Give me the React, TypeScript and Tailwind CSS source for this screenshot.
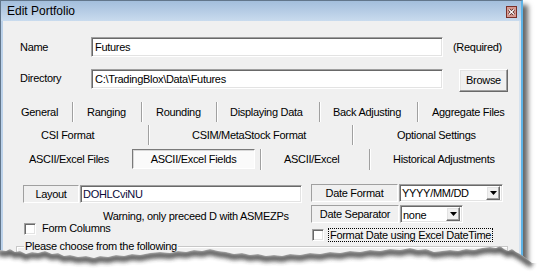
import React from "react";

const sunken =
  "border border-t-[#a0a0a0] border-l-[#a0a0a0] border-b-white border-r-white shadow-[inset_1px_1px_0_#696969,inset_-1px_-1px_0_#e3e3e3]";
const raised =
  "border border-t-white border-l-white border-b-[#696969] border-r-[#696969] shadow-[inset_-1px_-1px_0_#a0a0a0,inset_1px_1px_0_#e3e3e3]";
const etchBox =
  "border border-t-[#a0a0a0] border-l-[#a0a0a0] border-b-white border-r-white";

function Sep() {
  return (
    <div className="h-full w-[2px] shrink-0 border-l border-l-[#a0a0a0] border-r border-r-white" />
  );
}

function Tab({ cls, children }: { cls: string; children: React.ReactNode }) {
  return (
    <div className={`flex h-full shrink-0 items-center whitespace-nowrap ${cls}`}>
      {children}
    </div>
  );
}

function Arrow() {
  return (
    <div className={`flex h-[14px] w-[14px] shrink-0 items-center justify-center bg-[#f0f0f0] ${raised}`}>
      <svg width="7" height="4" viewBox="0 0 7 4">
        <path d="M0 0h7L3.5 4z" fill="#000" />
      </svg>
    </div>
  );
}

function Check() {
  return <div className={`h-[12px] w-[12px] shrink-0 bg-white ${sunken}`} />;
}

const jag: [number, number][] = [
  [-2, 250], [0, 250], [6, 251], [10, 249], [15, 252], [20, 251], [26, 254], [32, 252], [38, 253],
  [45, 251], [52, 254], [58, 253], [64, 256], [70, 255], [78, 257], [86, 256], [94, 258],
  [100, 256], [108, 257], [116, 255], [124, 256], [132, 254], [140, 255], [150, 253],
  [160, 252], [170, 253], [178, 251], [186, 252], [194, 250], [202, 251], [210, 249],
  [218, 251], [226, 252], [234, 254], [242, 253], [250, 255], [258, 254], [266, 256],
  [274, 255], [282, 256], [290, 254], [300, 255], [310, 253], [320, 254], [330, 252],
  [340, 253], [350, 251], [360, 252], [370, 250], [380, 251], [390, 249], [400, 250],
  [410, 248], [418, 250], [426, 249], [434, 252], [442, 251], [450, 250], [458, 251],
  [466, 249], [474, 250], [482, 248], [490, 247], [496, 248], [500, 246], [504, 249],
  [508, 251], [512, 249], [516, 252], [520, 254], [523, 256],
];

function Torn() {
  const clip =
    jag.map(([x, y]) => `${x},${y}`).join(" ") +
    " 527,259 532,263 545,263 545,285 -5,285";
  const shadow = jag
    .concat([[527, 259], [532, 262]])
    .map(([x, y]) => `${x},${y + 3}`)
    .join(" ");
  return (
    <svg
      className="pointer-events-none absolute left-0 top-0"
      width="539"
      height="275"
      viewBox="0 0 539 275"
    >
      <defs>
        <clipPath id="below">
          <polygon points={clip} />
        </clipPath>
        <filter id="blur" x="-10%" y="-50%" width="120%" height="200%">
          <feGaussianBlur stdDeviation="2" />
        </filter>
      </defs>
      <polygon points={clip} fill="#ffffff" />
      <g clipPath="url(#below)">
        <polyline
          points={shadow}
          fill="none"
          stroke="#2e2e2e"
          strokeWidth="6"
          opacity="0.8"
          filter="url(#blur)"
        />
      </g>
    </svg>
  );
}

export default function App() {
  return (
    <div className="relative h-[275px] w-[539px] overflow-hidden bg-white font-['Liberation_Sans',Arial,sans-serif] text-[11px] leading-[13px] tracking-[-0.3px] text-black">
      <div className="flex h-[268px] w-[523px] flex-col border border-[#62768b] border-r-[2px] border-r-[#5cb3e6] shadow-[5px_5px_5px_rgba(0,0,0,0.6)]">
        {/* title bar */}
        <div className="flex h-[20px] shrink-0 items-center justify-between bg-gradient-to-b from-[#a3bedc] to-[#c9dbee] pl-[6px] pr-[4px]">
          <span className="text-[12px] tracking-normal">Edit Portfolio</span>
          <svg width="11" height="12" viewBox="0 0 11 12" className="mt-[2px]">
            <rect x="0.5" y="0.5" width="10" height="11" fill="#d89b92" stroke="#7a3028" />
            <path d="M3 3.5l5 5M8 3.5l-5 5" stroke="#4a1c18" strokeWidth="2.6" />
            <path d="M3 3.5l5 5M8 3.5l-5 5" stroke="#ffffff" strokeWidth="1.3" />
          </svg>
        </div>
        {/* body */}
        <div className="flex flex-1 flex-col border-l-[2px] border-l-[#bcd2ea] border-r-[2px] border-r-[#d6e2ee] bg-[#f0f0f0]">
          {/* Name */}
          <div className="mt-[16px] flex h-[20px] items-center">
            <span className="ml-[17px] w-[71px]">Name</span>
            <div className={`flex h-[20px] w-[352px] items-center bg-white pl-[3px] ${sunken}`}>Futures</div>
            <span className="ml-[10px]">(Required)</span>
          </div>
          {/* Directory */}
          <div className="mt-[12px] flex items-start">
            <span className="ml-[17px] mt-[3px] w-[71px]">Directory</span>
            <div className={`flex h-[20px] w-[352px] items-center bg-white pl-[3px] ${sunken}`}>
              C:\TradingBlox\Data\Futures
            </div>
            <div className={`ml-[16px] flex h-[23px] w-[49px] items-center justify-center ${raised}`}>Browse</div>
          </div>
          {/* tab rows */}
          <div className="mt-[10px] flex h-[20px]">
            <Tab cls="w-[69px] pl-[18px]">General</Tab>
            <Sep />
            <Tab cls="w-[67px] pl-[13px]">Ranging</Tab>
            <Sep />
            <Tab cls="w-[73px] pl-[13px]">Rounding</Tab>
            <Sep />
            <Tab cls="w-[101px] pl-[12px]">Displaying Data</Tab>
            <Sep />
            <Tab cls="w-[96px] pl-[12px]">Back Adjusting</Tab>
            <Sep />
            <Tab cls="pl-[13px]">Aggregate Files</Tab>
          </div>
          <div className="mt-[3px] flex h-[20px]">
            <Tab cls="w-[145px] pl-[38px]">CSI Format</Tab>
            <Sep />
            <Tab cls="w-[202px] pl-[42px]">CSIM/MetaStock Format</Tab>
            <Sep />
            <Tab cls="pl-[43px]">Optional Settings</Tab>
          </div>
          <div className="mt-[4px] flex h-[21px]">
            <Tab cls="w-[129px] pl-[26px]">ASCII/Excel Files</Tab>
            <div className="flex h-[20px] w-[123px] shrink-0 items-center justify-center border border-t-[#7a7a7a] border-l-[#7a7a7a] border-b-white border-r-white bg-[#fafafa] shadow-[inset_1px_1px_0_#d8d8d8]">
              ASCII/Excel Fields
            </div>
            <div className="w-[5px] shrink-0" />
            <Sep />
            <Tab cls="w-[107px] pl-[22px]">ASCII/Excel</Tab>
            <Sep />
            <Tab cls="pl-[22px]">Historical Adjustments</Tab>
          </div>
          {/* lower section */}
          <div className="mt-[14px] flex items-start">
            <div className="ml-[20px] flex w-[279px] flex-col pt-[1px]">
              <div className="flex h-[18px]">
                <div className={`flex w-[56px] items-center justify-center ${etchBox}`}>Layout</div>
                <div className={`ml-[1px] flex w-[222px] items-center bg-white pl-[2px] text-[#0a0a3a] ${sunken}`}>
                  DOHLCviNU
                </div>
              </div>
              <div className="mt-[8px] pl-[80px] leading-[11px]">Warning, only preceed D with ASMEZPs</div>
              <div className="flex h-[13px] items-center">
                <div className="ml-[1px]">
                  <Check />
                </div>
                <span className="ml-[6px]">Form Columns</span>
              </div>
            </div>
            <div className="ml-[9px] flex flex-col">
              <div className="flex h-[18px]">
                <div className={`flex w-[87px] items-center justify-center ${etchBox}`}>Date Format</div>
                <div className={`ml-[1px] flex w-[104px] items-center justify-between bg-white pl-[2px] pr-[2px] ${sunken}`}>
                  <span>YYYY/MM/DD</span>
                  <Arrow />
                </div>
              </div>
              <div className="mt-[3px] flex h-[18px]">
                <div className={`flex w-[88px] items-center justify-center ${etchBox}`}>Date Separator</div>
                <div className={`ml-[1px] flex w-[63px] items-center justify-between bg-white pl-[2px] pr-[2px] ${sunken}`}>
                  <span className="mt-[2px]">none</span>
                  <Arrow />
                </div>
              </div>
              <div className="mt-[5px] flex h-[14px] items-center">
                <div className="ml-[1px]">
                  <Check />
                </div>
                <span className="ml-[4px] border border-dotted border-black px-[1px] leading-[12px]">
                  Format Date using Excel DateTime
                </span>
              </div>
            </div>
          </div>
          {/* group box */}
          <div className="ml-[13px] mt-[4px] h-[30px] w-[492px] border border-[#c8c8c8] shadow-[inset_1px_1px_0_#ffffff]">
            <span className="-mt-[7px] ml-[7px] block w-fit bg-[#f0f0f0] px-[1px]">
              Please choose from the following
            </span>
          </div>
        </div>
      </div>
      <Torn />
    </div>
  );
}
